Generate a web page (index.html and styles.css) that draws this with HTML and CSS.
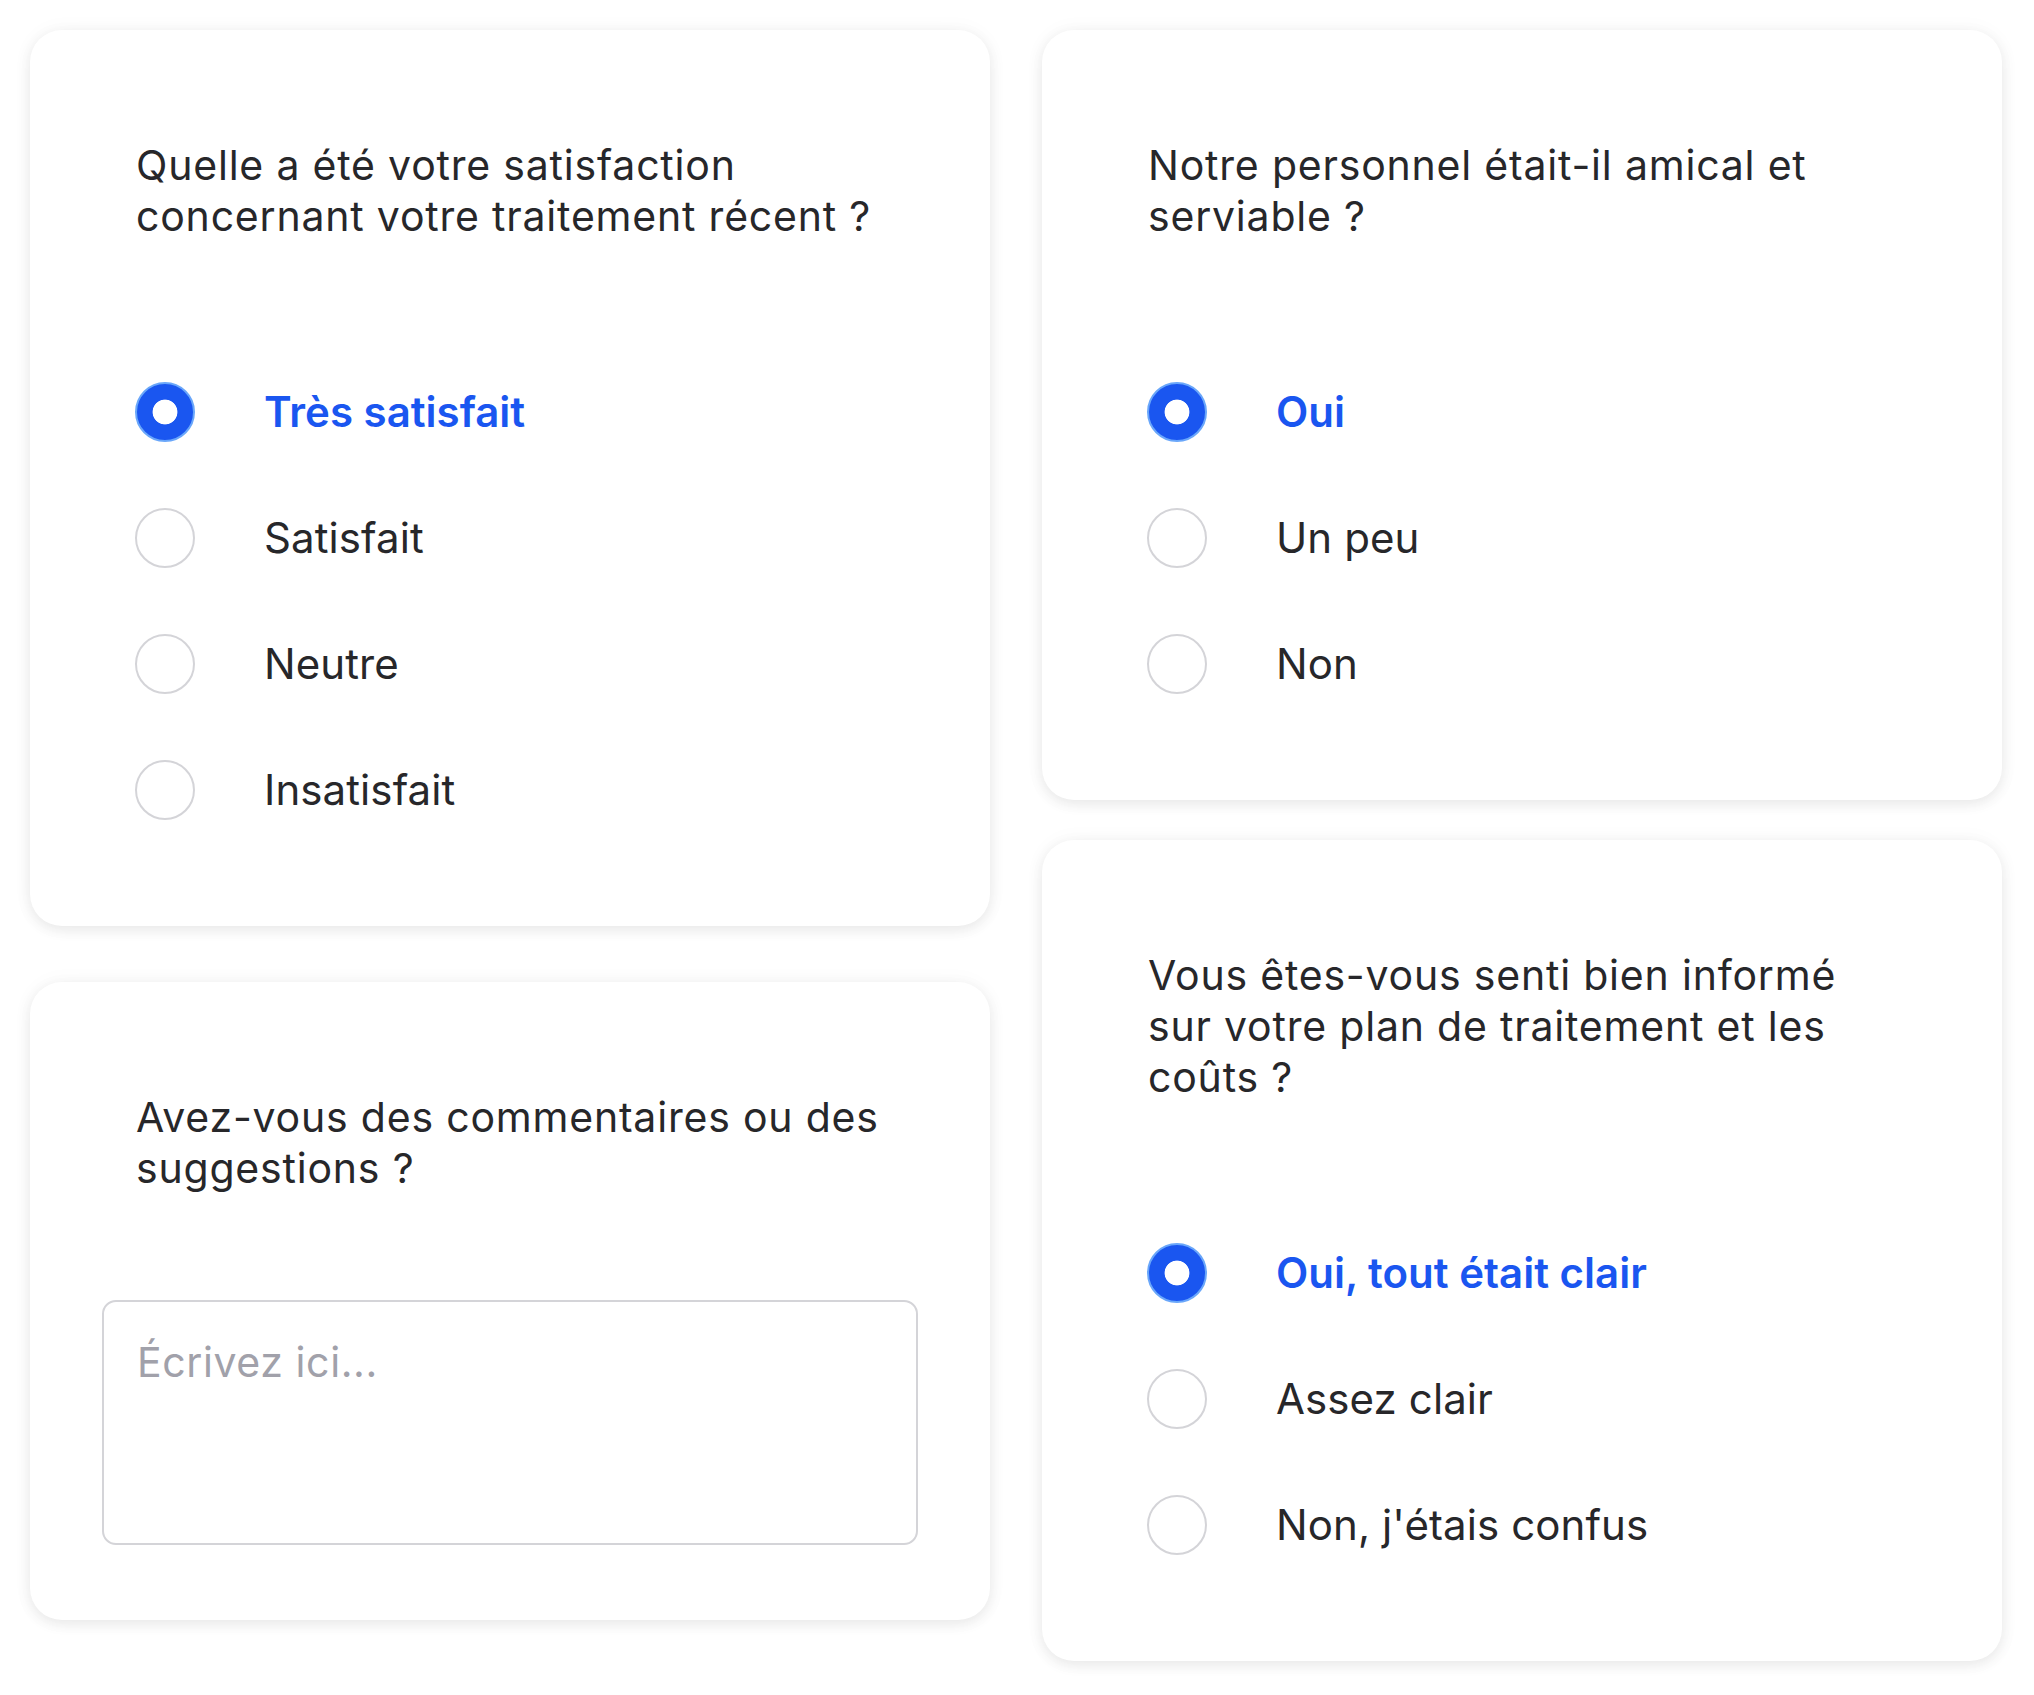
FILE: index.html
```html
<!DOCTYPE html>
<html lang="fr">
<head>
    <meta charset="UTF-8">
    <meta name="viewport" content="width=device-width, initial-scale=1.0">
    <title>Questionnaire de satisfaction</title>
    <link rel="stylesheet" href="styles.css">
</head>
<body>
    <div class="survey">
        <div class="column column-left">
            <div class="card">
                <p class="question">Quelle a été votre satisfaction<br>concernant votre traitement récent ?</p>
                <div class="options">
                    <label class="option selected">
                        <input type="radio" name="q1" checked>
                        <span>Très satisfait</span>
                    </label>
                    <label class="option">
                        <input type="radio" name="q1">
                        <span>Satisfait</span>
                    </label>
                    <label class="option">
                        <input type="radio" name="q1">
                        <span>Neutre</span>
                    </label>
                    <label class="option">
                        <input type="radio" name="q1">
                        <span>Insatisfait</span>
                    </label>
                </div>
            </div>

            <div class="card card-comment">
                <p class="question">Avez-vous des commentaires ou des<br>suggestions ?</p>
                <textarea class="comment" placeholder="Écrivez ici..."></textarea>
            </div>
        </div>

        <div class="column column-right">
            <div class="card">
                <p class="question">Notre personnel était-il amical et<br>serviable ?</p>
                <div class="options">
                    <label class="option selected">
                        <input type="radio" name="q2" checked>
                        <span>Oui</span>
                    </label>
                    <label class="option">
                        <input type="radio" name="q2">
                        <span>Un peu</span>
                    </label>
                    <label class="option">
                        <input type="radio" name="q2">
                        <span>Non</span>
                    </label>
                </div>
            </div>

            <div class="card">
                <p class="question">Vous êtes-vous senti bien informé<br>sur votre plan de traitement et les<br>coûts ?</p>
                <div class="options">
                    <label class="option selected">
                        <input type="radio" name="q3" checked>
                        <span>Oui, tout était clair</span>
                    </label>
                    <label class="option">
                        <input type="radio" name="q3">
                        <span>Assez clair</span>
                    </label>
                    <label class="option">
                        <input type="radio" name="q3">
                        <span>Non, j'étais confus</span>
                    </label>
                </div>
            </div>
        </div>
    </div>
</body>
</html>
```

FILE: styles.css
```css
body {
    font-family: 'Inter', 'Noto Sans', sans-serif;
    background-color: #fff;
    color: #27272a;
    margin: 0;
    padding: 0;
}

.survey {
    display: grid;
    grid-template-columns: 960px 960px;
    column-gap: 52px;
    align-items: start;
    padding: 30px;
}

.column {
    display: flex;
    flex-direction: column;
}

.column-left {
    gap: 56px;
}

.column-right {
    gap: 40px;
}

.card {
    background: #fff;
    border-radius: 32px;
    box-shadow: 0 4px 14px rgba(0, 0, 0, 0.08), 0 0 22px rgba(0, 0, 0, 0.035);
    padding: 110px 72px 106px;
}

.question {
    margin: 0 34px 140px;
    font-size: 41px;
    line-height: 51px;
    letter-spacing: 0.8px;
    font-weight: 400;
    color: #27272a;
}

.options {
    display: flex;
    flex-direction: column;
    gap: 66px;
    padding: 0 33px;
}

.option {
    display: flex;
    align-items: center;
    gap: 69px;
    font-size: 42px;
    line-height: 60px;
    letter-spacing: 0.1px;
    cursor: pointer;
}

.option input {
    appearance: none;
    -webkit-appearance: none;
    flex: none;
    width: 60px;
    height: 60px;
    margin: 0;
    border-radius: 50%;
    border: 2.5px solid #d4d4d8;
    background: #fff;
}

.option input:checked {
    border: 2px solid #6aa7fa;
    background: radial-gradient(circle, #fff 12px, #1a56f0 12.8px);
}

.option.selected {
    color: #1a56f0;
    font-weight: 600;
    letter-spacing: 0;
}

.card-comment {
    padding-bottom: 75px;
}

.card-comment .question {
    margin-bottom: 106px;
}

.comment {
    display: block;
    width: 100%;
    height: 245px;
    box-sizing: border-box;
    padding: 35px 33px;
    border: 2px solid #d4d4d8;
    border-radius: 14px;
    font-family: 'Inter', 'Noto Sans', sans-serif;
    font-size: 41px;
    line-height: 50px;
    letter-spacing: 0.6px;
    color: #27272a;
    resize: none;
    outline: none;
}

.comment::placeholder {
    color: #a1a1aa;
}
```
